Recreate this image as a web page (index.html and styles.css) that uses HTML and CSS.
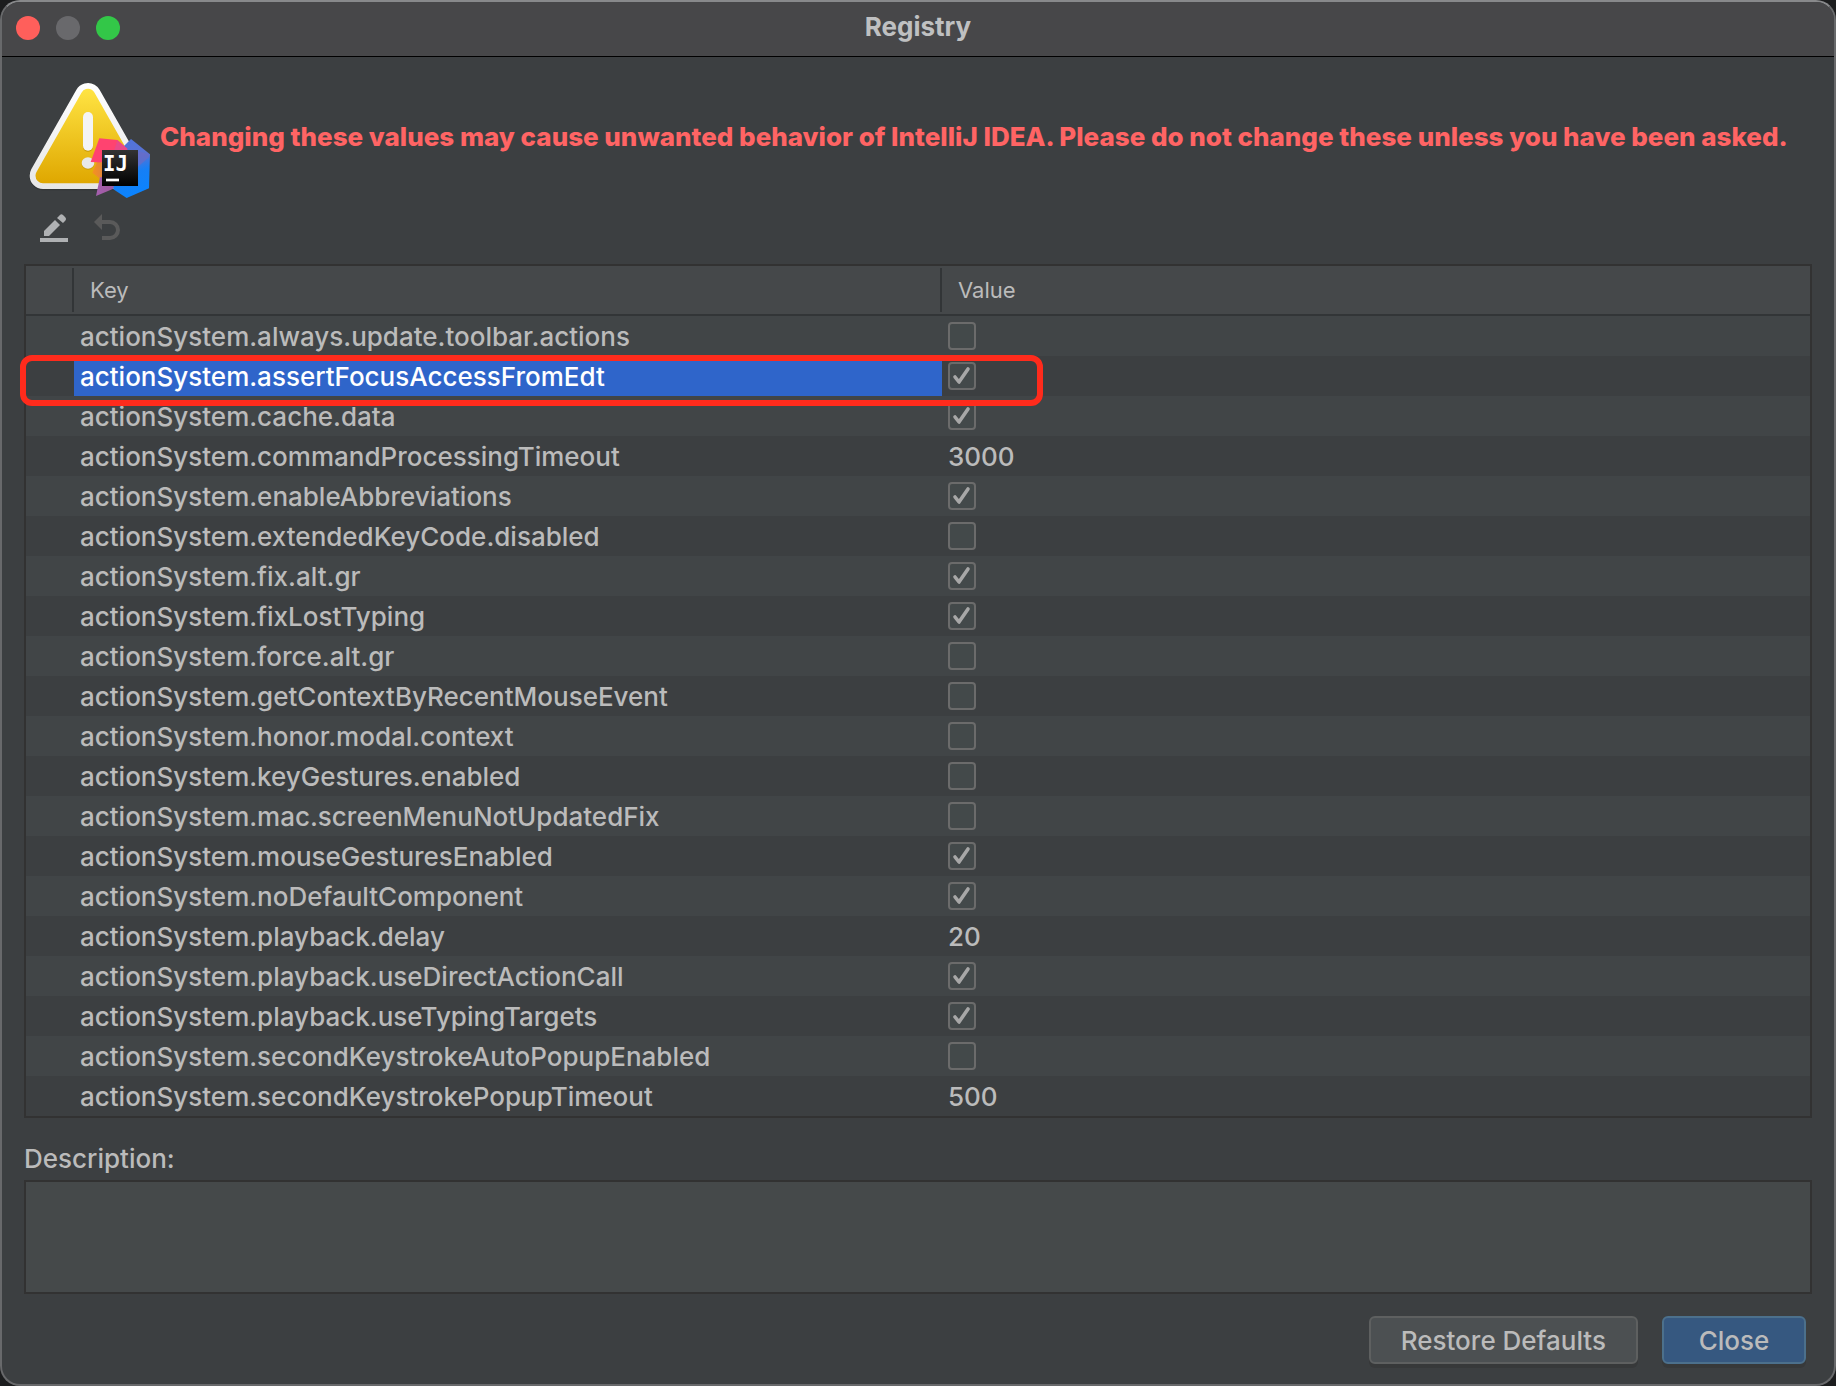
FILE: index.html
```
<!DOCTYPE html>
<html lang="en">
<head>
    <meta charset="UTF-8">
    <meta name="viewport" content="width=device-width, initial-scale=1.0">
    <title>Registry</title>
    <link rel="stylesheet" href="styles.css">
</head>
<body>
    <div class="dialog">
        <header class="titlebar">
            <div class="lights">
                <button class="light light-close" aria-label="Close window"></button>
                <button class="light light-min" aria-label="Minimize" disabled></button>
                <button class="light light-zoom" aria-label="Zoom"></button>
            </div>
            <h1>Registry</h1>
        </header>

        <main class="content">
            <div class="warning">
                <svg class="warning-icon" viewBox="24 12 366 378" aria-hidden="true">
                    <defs>
                        <linearGradient id="white" gradientUnits="userSpaceOnUse" x1="0" y1="39" x2="0" y2="357">
                            <stop offset="0" stop-color="#ffffff"/>
                            <stop offset="1" stop-color="#e6e6e6"/>
                        </linearGradient>
                        <linearGradient id="yellow" gradientUnits="userSpaceOnUse" x1="0" y1="57" x2="0" y2="340">
                            <stop offset="0" stop-color="#ffe443"/>
                            <stop offset="1" stop-color="#dfa700"/>
                        </linearGradient>
                        <linearGradient id="blue" x1="0.3" y1="0" x2="0.5" y2="1">
                            <stop offset="0" stop-color="#4f74dc"/>
                            <stop offset="0.35" stop-color="#5a72d2"/>
                            <stop offset="0.6" stop-color="#167ff5"/>
                            <stop offset="1" stop-color="#0a84ff"/>
                        </linearGradient>
                        <linearGradient id="orange" x1="0" y1="0" x2="1" y2="0">
                            <stop offset="0" stop-color="#f6921e"/>
                            <stop offset="1" stop-color="#cf7a55"/>
                        </linearGradient>
                        <linearGradient id="purple" x1="0" y1="0" x2="1" y2="0">
                            <stop offset="0" stop-color="#a45fae"/>
                            <stop offset="0.6" stop-color="#a05aa0"/>
                            <stop offset="1" stop-color="#5a72d2"/>
                        </linearGradient>
                        <linearGradient id="black" x1="0" y1="0" x2="0" y2="1">
                            <stop offset="0" stop-color="#333333"/>
                            <stop offset="1" stop-color="#000000"/>
                        </linearGradient>
                    </defs>
                    <path d="M204 83L339 320H69Z" fill="none" stroke="#2b2e30" stroke-opacity="0.6" stroke-width="82" stroke-linejoin="round"/>
                    <path d="M204 79L339 317H69Z" fill="url(#white)" stroke="url(#white)" stroke-width="80" stroke-linejoin="round"/>
                    <path d="M204 79L339 317H69Z" fill="url(#yellow)" stroke="url(#yellow)" stroke-width="45" stroke-linejoin="round"/>
                    <rect x="189" y="130" width="30" height="116" rx="15" fill="#b98d0a" opacity="0.6"/>
                    <rect x="189" y="126" width="30" height="116" rx="15" fill="#f4f4f4"/>
                    <ellipse cx="204" cy="282" rx="19" ry="17" fill="#b98d0a" opacity="0.6"/>
                    <ellipse cx="204" cy="279" rx="19" ry="17" fill="#e8e8e8"/>
                    <path d="M217 308L232 274L280 290L270 350Z" fill="url(#orange)"/>
                    <path d="M240 322L228 378L300 348L300 320Z" fill="url(#purple)"/>
                    <path d="M333 207L390 253L387 355L320 384L280 358L300 240Z" fill="url(#blue)"/>
                    <path d="M389 253L387 262L354 290V340L340 240Z" fill="#6a6bc6" opacity="0.7"/>
                    <path d="M238 205L292 210L322 236L300 280L212 276Z" fill="#ff4370"/>
                    <path d="M292 210L322 236V250H280Z" fill="#e84a8a"/>
                    <rect x="246" y="240" width="108" height="108" fill="url(#black)"/>
                    <text x="249" y="302" class="logo-text">IJ</text>
                    <rect x="258" y="326" width="39" height="8" fill="#ffffff"/>
                </svg>
                <p>Changing these values may cause unwanted behavior of IntelliJ IDEA. Please do not change these unless you have been asked.</p>
            </div>

            <div class="toolbar">
                <button class="tool" aria-label="Edit value">
                    <svg viewBox="0 0 32 32" fill="#afb1b3">
                        <path d="M6 19L17 8L22 13L11 24H6Z"/>
                        <path d="M19 6L21 4Q23 1 25 3L27 5Q29 7 27 9L25 11Z"/>
                        <rect x="2" y="26" width="28" height="4"/>
                    </svg>
                </button>
                <button class="tool" aria-label="Revert to default" disabled>
                    <svg viewBox="0 0 32 32" fill="#5a5a5a">
                        <path d="M2 10L10 2V18Z"/>
                        <path d="M10 10H18a8 8 0 0 1 0 16H10" fill="none" stroke="#5a5a5a" stroke-width="4"/>
                    </svg>
                </button>
            </div>

            <div class="table-box">
                <table class="registry">
                    <colgroup>
                        <col class="col-mark">
                        <col class="col-key">
                        <col>
                    </colgroup>
                    <thead>
                        <tr><th></th><th>Key</th><th>Value</th></tr>
                    </thead>
                    <tbody>
                        <tr><td></td><td><label for="k1">actionSystem.always.update.toolbar.actions</label></td><td><input type="checkbox" id="k1"></td></tr>
                        <tr class="selected"><td></td><td><label for="k2">actionSystem.assertFocusAccessFromEdt</label></td><td><input type="checkbox" id="k2" checked></td></tr>
                        <tr><td></td><td><label for="k3">actionSystem.cache.data</label></td><td><input type="checkbox" id="k3" checked></td></tr>
                        <tr><td></td><td>actionSystem.commandProcessingTimeout</td><td>3000</td></tr>
                        <tr><td></td><td><label for="k5">actionSystem.enableAbbreviations</label></td><td><input type="checkbox" id="k5" checked></td></tr>
                        <tr><td></td><td><label for="k6">actionSystem.extendedKeyCode.disabled</label></td><td><input type="checkbox" id="k6"></td></tr>
                        <tr><td></td><td><label for="k7">actionSystem.fix.alt.gr</label></td><td><input type="checkbox" id="k7" checked></td></tr>
                        <tr><td></td><td><label for="k8">actionSystem.fixLostTyping</label></td><td><input type="checkbox" id="k8" checked></td></tr>
                        <tr><td></td><td><label for="k9">actionSystem.force.alt.gr</label></td><td><input type="checkbox" id="k9"></td></tr>
                        <tr><td></td><td><label for="k10">actionSystem.getContextByRecentMouseEvent</label></td><td><input type="checkbox" id="k10"></td></tr>
                        <tr><td></td><td><label for="k11">actionSystem.honor.modal.context</label></td><td><input type="checkbox" id="k11"></td></tr>
                        <tr><td></td><td><label for="k12">actionSystem.keyGestures.enabled</label></td><td><input type="checkbox" id="k12"></td></tr>
                        <tr><td></td><td><label for="k13">actionSystem.mac.screenMenuNotUpdatedFix</label></td><td><input type="checkbox" id="k13"></td></tr>
                        <tr><td></td><td><label for="k14">actionSystem.mouseGesturesEnabled</label></td><td><input type="checkbox" id="k14" checked></td></tr>
                        <tr><td></td><td><label for="k15">actionSystem.noDefaultComponent</label></td><td><input type="checkbox" id="k15" checked></td></tr>
                        <tr><td></td><td>actionSystem.playback.delay</td><td>20</td></tr>
                        <tr><td></td><td><label for="k17">actionSystem.playback.useDirectActionCall</label></td><td><input type="checkbox" id="k17" checked></td></tr>
                        <tr><td></td><td><label for="k18">actionSystem.playback.useTypingTargets</label></td><td><input type="checkbox" id="k18" checked></td></tr>
                        <tr><td></td><td><label for="k19">actionSystem.secondKeystrokeAutoPopupEnabled</label></td><td><input type="checkbox" id="k19"></td></tr>
                        <tr><td></td><td>actionSystem.secondKeystrokePopupTimeout</td><td>500</td></tr>
                    </tbody>
                </table>
                <div class="highlight"></div>
            </div>

            <label class="description-label" for="description">Description:</label>
            <textarea id="description" class="description" readonly></textarea>

            <div class="buttons">
                <button class="btn">Restore Defaults</button>
                <button class="btn btn-primary">Close</button>
            </div>
        </main>
    </div>
</body>
</html>
```

FILE: styles.css
```
* {
    box-sizing: border-box;
}

body {
    margin: 0;
    background-color: #1c1d1e;
    color: #bbbbbb;
    font-family: Inter, "Liberation Sans", sans-serif;
    font-size: 26px;
    font-weight: 500;
    line-height: 32px;
}

.dialog {
    min-height: 100vh;
    background-color: #3c3f41;
    border: 2px solid #68696b;
    border-top-color: #88898b;
    border-radius: 20px;
    overflow: hidden;
}

/* Title bar */
.titlebar {
    display: grid;
    grid-template-columns: 1fr auto 1fr;
    align-items: center;
    height: 55px;
    padding: 0 14px 2px;
    background-color: #474749;
    border-bottom: 1px solid #000000;
}

.titlebar h1 {
    margin: 0;
    padding-bottom: 2px;
    font-size: 26px;
    font-weight: 700;
    line-height: 32px;
    color: #bfc0c1;
}

.lights {
    display: flex;
    gap: 16px;
}

.light {
    width: 24px;
    height: 24px;
    padding: 0;
    border: none;
    border-radius: 50%;
}

.light-close {
    background-color: #ff5f5b;
}

.light-min {
    background-color: #69696c;
}

.light-zoom {
    background-color: #33c748;
}

.content {
    padding: 17px 22px 20px;
}

/* Warning */
.warning {
    display: flex;
    align-items: center;
    gap: 10px;
    padding-left: 4px;
}

.warning-icon {
    flex: none;
    width: 122px;
    height: 126px;
}

.logo-text {
    font-family: "DejaVu Sans Mono", monospace;
    font-size: 62px;
    font-weight: 700;
    fill: #ffffff;
}

.warning p {
    margin: 0;
    color: #ff6464;
    font-weight: 800;
    white-space: nowrap;
}

.toolbar {
    display: flex;
    gap: 22px;
    margin: 12px 0 20px 14px;
}

.tool {
    width: 32px;
    height: 32px;
    padding: 0;
    border: none;
    background: none;
}

.tool svg {
    display: block;
}

/* Table */
.table-box {
    position: relative;
    border: 2px solid #323232;
}

.registry {
    width: 100%;
    table-layout: fixed;
    border-collapse: separate;
    border-spacing: 0;
}

.col-mark {
    width: 48px;
}

.col-key {
    width: 868px;
}

.registry th {
    height: 50px;
    padding: 0 16px;
    font-size: 22px;
    font-weight: 400;
    text-align: left;
    background: linear-gradient(#323537, #323537) right center / 2px 44px no-repeat #45484a;
    border-bottom: 2px solid #323537;
}

.registry th:last-child {
    background: #45484a;
}

.registry td {
    height: 40px;
    padding: 2px 6px 0;
    white-space: nowrap;
}

.registry tbody tr:nth-child(odd) {
    background-color: #414547;
}

.registry .selected td:nth-child(2) {
    background-color: #2f65ca;
    color: #ffffff;
}

.registry input {
    appearance: none;
    display: block;
    width: 28px;
    height: 28px;
    margin: 0 0 2px;
    border: 2px solid #6b6b6b;
    border-radius: 4px;
    background-color: #43494a;
}

.registry input:checked {
    background-image: url("data:image/svg+xml,%3Csvg xmlns='http://www.w3.org/2000/svg' viewBox='0 0 24 24'%3E%3Cpath d='M5 13L9 18L18 5' fill='none' stroke='%23a7a7a7' stroke-width='3.6' stroke-linecap='round' stroke-linejoin='round'/%3E%3C/svg%3E");
}

/* Red frame around the selected row */
.highlight {
    position: absolute;
    top: 89px;
    left: -6px;
    width: 1023px;
    height: 51px;
    border: 6px solid #ff2b1c;
    border-radius: 12px;
    pointer-events: none;
}

/* Description */
.description-label {
    display: block;
    margin: 25px 0 5px;
}

.description {
    display: block;
    width: 100%;
    height: 114px;
    border: 2px solid #323232;
    background-color: #45494a;
    color: #bbbbbb;
    font: inherit;
    resize: none;
    outline: none;
}

.buttons {
    display: flex;
    justify-content: flex-end;
    gap: 24px;
    margin-top: 22px;
    padding-right: 6px;
}

.btn {
    height: 48px;
    min-width: 144px;
    padding: 2px 30px 0;
    border: 2px solid #5e6060;
    border-radius: 6px;
    background-color: #4c5052;
    box-shadow: 0 4px 0 #37393a;
    color: #bbbbbb;
    font: inherit;
}

.btn-primary {
    border-color: #4c708c;
    background-color: #365880;
}
```
